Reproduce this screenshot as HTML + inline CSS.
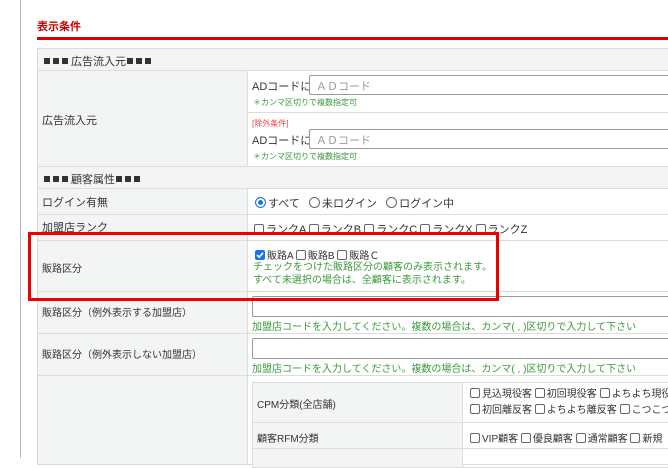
<!DOCTYPE html>
<html><head><meta charset="utf-8"><style>
*{box-sizing:border-box;margin:0;padding:0}
body{width:668px;height:458px;overflow:hidden;background:#fff;font-family:"Liberation Sans","Noto Sans CJK JP",sans-serif;font-size:11px;color:#333;position:relative}
.a{position:absolute}
.vl{left:20px;top:0;width:1px;height:458px;background:#bbb}
.title{left:37px;top:18px;color:#c00;font-size:11px;font-weight:bold}
.rl{left:37px;top:37px;width:631px;height:3px;background:#d00}
.cell{position:absolute;border:1px solid #dcdcdc}
.g{background:#f3f4f4}
.t{position:absolute;white-space:nowrap}
.gr{color:#3a9a3a}
.sq{display:inline-block;width:6px;height:6px;background:#333;margin-right:3px;vertical-align:1px}
.inp{position:absolute;border:1px solid #999;border-radius:2px;height:20px;background:#fff;color:#999;padding:2px 6px;font-size:11px}
.cb{display:inline-block;width:10px;height:10px;border:1px solid #666;border-radius:2px;vertical-align:-1px;margin-right:2px;position:relative}
.rd{display:inline-block;width:11px;height:11px;border:1px solid #666;border-radius:50%;vertical-align:-1px;margin-right:2px}
.red{position:absolute;left:28px;top:232px;width:471px;height:69px;border:3px solid #e00}
</style></head><body>
<div class="a vl"></div>
<div class="a title">表示条件</div>
<div class="a rl"></div>

<div class="cell g" style="left:37px;top:48px;width:640px;height:23px"></div>
<div class="t" style="left:44px;top:53px"><span class="sq"></span><span class="sq"></span><span class="sq"></span>広告流入元<span class="sq" style="margin-left:1px"></span><span class="sq"></span><span class="sq"></span></div>
<div class="cell g" style="left:37px;top:70px;width:211px;height:97px"></div>
<div class="t" style="left:42px;top:112px">広告流入元</div>
<div class="cell" style="left:247px;top:70px;width:430px;height:43px"></div>
<div class="cell" style="left:247px;top:112px;width:430px;height:55px"></div>
<div class="t" style="left:252px;top:78px">ADコードに</div>
<div class="inp" style="left:309px;top:75px;width:380px">ＡＤコード</div>
<div class="t gr" style="left:253px;top:97px;font-size:8px">＊カンマ区切りで複数指定可</div>
<div class="t" style="left:252px;top:118px;font-size:8px;color:#e44">[除外条件]</div>
<div class="t" style="left:252px;top:132px">ADコードに</div>
<div class="inp" style="left:309px;top:129px;width:380px">ＡＤコード</div>
<div class="t gr" style="left:253px;top:151px;font-size:8px">＊カンマ区切りで複数指定可</div>

<div class="cell g" style="left:37px;top:166px;width:640px;height:23px"></div>
<div class="t" style="left:44px;top:171px"><span class="sq"></span><span class="sq"></span><span class="sq"></span>顧客属性<span class="sq" style="margin-left:1px"></span><span class="sq"></span><span class="sq"></span></div>

<div class="cell g" style="left:37px;top:188px;width:211px;height:27px"></div>
<div class="cell" style="left:247px;top:188px;width:430px;height:27px"></div>
<div class="t" style="left:42px;top:194px">ログイン有無</div>
<div class="t" style="left:255px;top:195px"><span class="rd" style="border:1px solid #1a73e8;background:#1a73e8;box-shadow:inset 0 0 0 2px #fff"></span>すべて &nbsp; <span class="rd"></span>未ログイン &nbsp; <span class="rd"></span>ログイン中</div>

<div class="cell g" style="left:37px;top:214px;width:211px;height:27px"></div>
<div class="cell" style="left:247px;top:214px;width:430px;height:27px"></div>
<div class="t" style="left:42px;top:219px">加盟店ランク</div>
<div class="t" style="left:254px;top:221px"><span class="cb"></span>ランクA <span class="cb"></span>ランクB <span class="cb"></span>ランクC <span class="cb"></span>ランクX <span class="cb"></span>ランクZ</div>

<div class="cell g" style="left:37px;top:240px;width:211px;height:52px"></div>
<div class="cell" style="left:247px;top:240px;width:430px;height:52px"></div>
<div class="t" style="left:42px;top:260px;font-size:10px">販路区分</div>
<div class="t" style="left:255px;top:247px;font-size:10px"><span class="cb" style="background:#1a73e8;border-color:#1a73e8"><svg width="10" height="10" style="position:absolute;left:-1px;top:-1px" viewBox="0 0 10 10"><path d="M2 5 L4.2 7.2 L8 2.8" stroke="#fff" stroke-width="1.6" fill="none"/></svg></span>販路A <span class="cb"></span>販路B <span class="cb"></span>販路Ｃ</div>
<div class="t gr" style="left:253px;top:261px;font-size:10px;line-height:13px">チェックをつけた販路区分の顧客のみ表示されます。<br>すべて未選択の場合は、全顧客に表示されます。</div>

<div class="cell g" style="left:37px;top:291px;width:211px;height:43px"></div>
<div class="cell" style="left:247px;top:291px;width:430px;height:43px"></div>
<div class="t" style="left:42px;top:304px;font-size:10px">販路区分（例外表示する加盟店）</div>
<div class="inp" style="left:252px;top:296px;width:430px;height:21px"></div>
<div class="t gr" style="left:252px;top:318px;font-size:10px">加盟店コードを入力してください。複数の場合は、カンマ( , )区切りで入力して下さい</div>

<div class="cell g" style="left:37px;top:333px;width:211px;height:43px"></div>
<div class="cell" style="left:247px;top:333px;width:430px;height:43px"></div>
<div class="t" style="left:42px;top:346px;font-size:10px">販路区分（例外表示しない加盟店）</div>
<div class="inp" style="left:252px;top:338px;width:430px;height:21px"></div>
<div class="t gr" style="left:252px;top:360px;font-size:10px">加盟店コードを入力してください。複数の場合は、カンマ( , )区切りで入力して下さい</div>

<div class="cell g" style="left:37px;top:375px;width:211px;height:90px"></div>
<div class="cell" style="left:247px;top:375px;width:430px;height:90px"></div>
<div class="cell g" style="left:252px;top:382px;width:211px;height:41px"></div>
<div class="cell" style="left:462px;top:382px;width:220px;height:41px"></div>
<div class="t" style="left:257px;top:396px;font-size:10px">CPM分類(全店舗)</div>
<div class="t" style="left:470px;top:387px;font-size:10px;line-height:16px"><span class="cb"></span>見込現役客 <span class="cb"></span>初回現役客 <span class="cb"></span>よちよち現役客<br><span class="cb"></span>初回離反客 <span class="cb"></span>よちよち離反客 <span class="cb"></span>こつこつ</div>
<div class="cell g" style="left:252px;top:422px;width:211px;height:27px"></div>
<div class="cell" style="left:462px;top:422px;width:220px;height:27px"></div>
<div class="t" style="left:257px;top:430px;font-size:10px">顧客RFM分類</div>
<div class="t" style="left:470px;top:430px;font-size:10px"><span class="cb"></span>VIP顧客 <span class="cb"></span>優良顧客 <span class="cb"></span>通常顧客 <span class="cb"></span>新規</div>
<div class="cell g" style="left:252px;top:448px;width:211px;height:20px"></div>
<div class="cell" style="left:462px;top:448px;width:220px;height:20px"></div>

<div class="red"></div>
</body></html>
